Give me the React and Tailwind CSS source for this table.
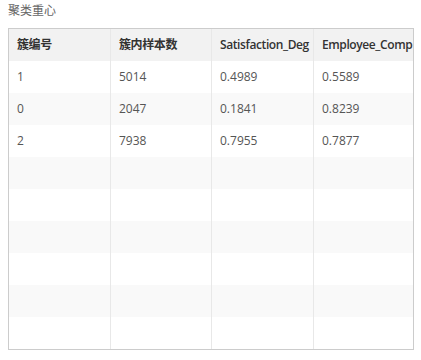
import React from "react";

const rows = [
  ["1", "5014", "0.4989", "0.5589"],
  ["0", "2047", "0.1841", "0.8239"],
  ["2", "7938", "0.7955", "0.7877"],
];

// column headers as far as the narrow columns show them
const headers = ["簇编号", "簇内样本数", "Satisfaction_Deg", "Employee_Comp"];

const App = () => {
  const body = [...rows];
  while (body.length < 9) body.push(["", "", "", ""]);

  return (
    <div
      className="w-[421px] h-[360px] bg-white px-2 pt-[3px]"
      style={{ fontFamily: '"Open Sans", "Noto Sans CJK SC", sans-serif' }}
    >
      <div className="text-[12px] leading-[16px] text-[#666]">聚类重心</div>
      {/* table */}
      <div className="mt-[9px] w-[406px] border border-[#cccccc] overflow-hidden">
        <div className="grid grid-cols-[102px_101px_102px_99px] h-[32px] bg-[#f2f2f2]">
          {headers.map((h, i) => (
            <div
              key={i}
              className={`flex items-center pl-2 text-[12px] font-semibold tracking-[-0.4px] text-[#333] whitespace-nowrap overflow-hidden ${i < 3 ? "border-r border-[#e8e8e8]" : ""}`}
            >
              {h}
            </div>
          ))}
        </div>
        {body.map((r, ri) => (
          <div
            key={ri}
            className={`grid grid-cols-[102px_101px_102px_99px] h-[32px] ${ri % 2 === 1 ? "bg-[#f9f9f9]" : "bg-white"}`}
          >
            {r.map((c, ci) => (
              <div
                key={ci}
                className={`flex items-center pl-2 text-[12px] text-[#555] whitespace-nowrap overflow-hidden ${ci < 3 ? "border-r border-[#e8e8e8]" : ""}`}
              >
                {c}
              </div>
            ))}
          </div>
        ))}
      </div>
    </div>
  );
};

export default App;
